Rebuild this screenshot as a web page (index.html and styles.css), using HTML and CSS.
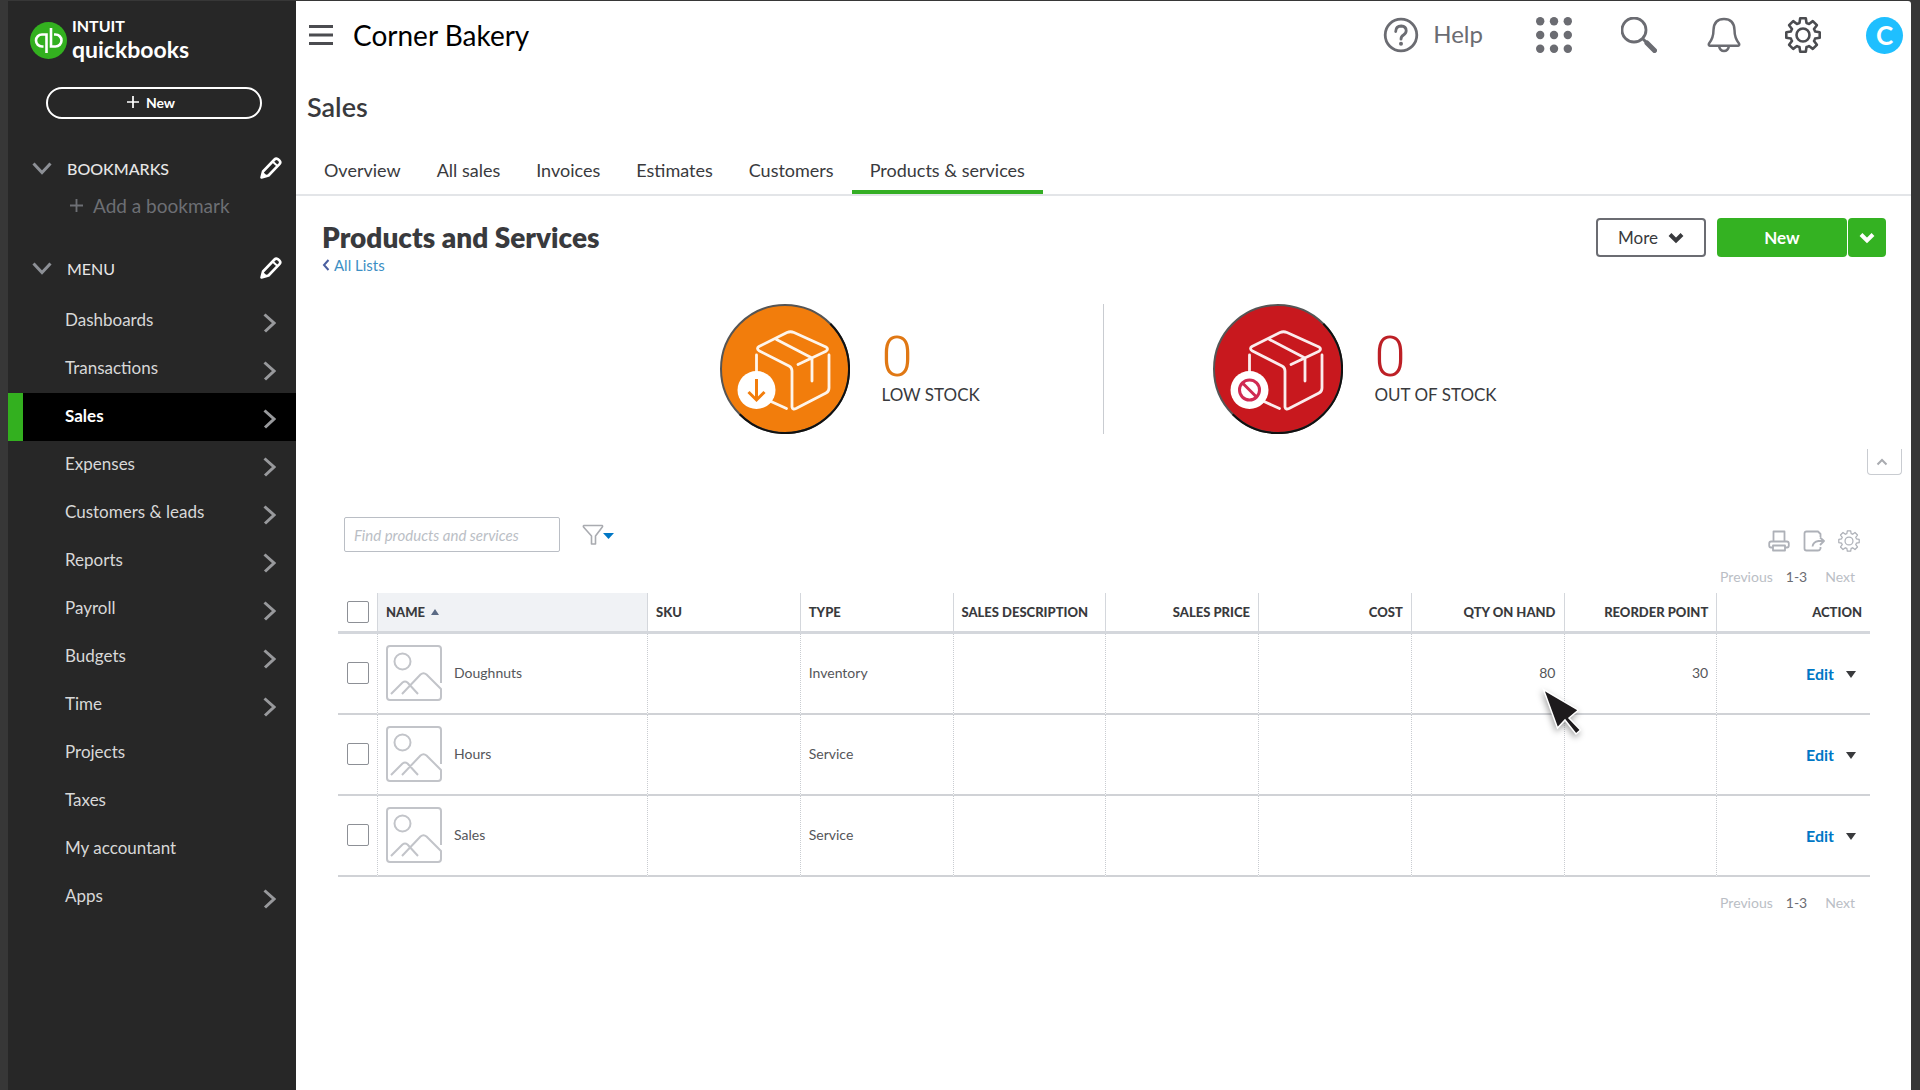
FILE: index.html
```html
<!DOCTYPE html>
<html lang="en">
<head>
<meta charset="utf-8">
<title>Products and Services</title>
<meta name="viewport" content="width=device-width, initial-scale=1">
<link rel="stylesheet" href="styles.css">
</head>
<body>
<svg class="symbols" aria-hidden="true">
  <symbol id="chevron-right" viewBox="0 0 13 20"><path d="M1.5 1.5 11 10l-9 8.500" fill="none" stroke="currentColor" stroke-width="3"/></symbol>
  <symbol id="chevron-down" viewBox="0 0 20 13"><path d="M1.500 1.500 10 10.500l8.500-9" fill="none" stroke="currentColor" stroke-width="3"/></symbol>
  <symbol id="chevron-bold" viewBox="0 0 16 12"><path d="M2 2.500l6 6 6-6" fill="none" stroke="currentColor" stroke-width="4"/></symbol>
  <symbol id="pencil" viewBox="0 0 22 22"><g fill="none" stroke="currentColor" stroke-width="2.600" stroke-linejoin="round"><path d="M1.500 20.500l1.500-6L14.500 2.500q1.500-1.500 3.200-.4l1.800 1.500q1.500 1.500.2 3.200L8.500 18.500z"/><path d="M12.800 4.800l4.700 4.200" stroke-width="2"/></g><path d="M1 21l2-6 4.500 4z" fill="currentColor"/></symbol>
  <symbol id="gear" viewBox="-18 -18 36 36"><g fill="none" stroke="currentColor" stroke-linejoin="round"><path d="M-3.500-12.100-2.800-16.700H2.800L3.500-12.100Q5 -11.700 6-11L9.800-13.900 13.900-9.800 11-6Q11.700-5 12.100-3.500L16.700-2.800V2.800L12.100 3.500Q11.700 5 11 6L13.900 9.800 9.800 13.900 6 11Q5 11.700 3.500 12.100L2.800 16.700H-2.800L-3.500 12.100Q-5 11.700-6 11L-9.800 13.900-13.900 9.800-11 6Q-11.700 5-12.100 3.500L-16.700 2.800V-2.800L-12.100-3.500Q-11.700-5-11-6L-13.900-9.800-9.800-13.900-6-11Q-5-11.700-3.500-12.100Z"/><circle r="6.500"/></g></symbol>
  <symbol id="box" viewBox="0 0 130 130"><g fill="none" stroke="#fff" stroke-opacity=".92" stroke-width="2.800" stroke-linecap="round" stroke-linejoin="round"><path d="M67 28.500q3.500-1.500 7 0l32 14.500q3 1.800 0 4.200L78 60.500M67 28.500 39 42.500q-3 2 0 4.200L69 62q3 1.500 3 5v36q.5 3 4 1.500L106 89q3-1.500 3-5V51M56.500 35.500 92 54v23M36.500 51v18M51 97.500l15.500 7"/></g><circle cx="36.500" cy="86" r="19" fill="#fff"/></symbol>
  <symbol id="thumb" viewBox="0 0 56 56"><g fill="none" stroke="currentColor" stroke-width="2" stroke-linejoin="round"><path d="M55 38V4q0-3-3-3H4Q1 1 1 4v48q0 3 3 3h48q3 0 3-3v-8L40.500 29.500Q37.500 27 34.500 29.500L16 49M5 49l11.500-11.500q2.500-2 5 0L32 49"/><circle cx="16.500" cy="16.500" r="8"/></g></symbol>
</svg>

<aside class="sidebar">
  <a class="brand" href="#">
    <svg class="brand-mark" viewBox="0 0 37 37" aria-hidden="true"><circle cx="18.500" cy="18.500" r="18.500" fill="#33b01f"/><g fill="none" stroke="#fff" stroke-width="2.600"><path d="M16.500 31V12.500H12a6 6 0 0 0 0 12h1.500M21 6v18.500h4.500a6 6 0 0 0 0-12H24"/></g></svg>
    <span class="brand-text"><span class="brand-top">INTUIT</span><span class="brand-name">quickbooks</span></span>
  </a>
  <button class="new-pill" type="button"><svg viewBox="0 0 14 14" aria-hidden="true"><path d="M7 0v14M0 7h14" stroke="currentColor" stroke-width="2"/></svg>New</button>

  <div class="group-head bookmarks"><svg class="fold" aria-hidden="true"><use href="#chevron-down"/></svg><span>BOOKMARKS</span><button type="button" aria-label="Edit bookmarks"><svg class="pencil"><use href="#pencil"/></svg></button></div>
  <a class="add-bookmark" href="#"><svg viewBox="0 0 14 14" aria-hidden="true"><path d="M7 0v14M0 7h14" stroke="currentColor" stroke-width="2"/></svg>Add a bookmark</a>
  <div class="group-head menu-head"><svg class="fold" aria-hidden="true"><use href="#chevron-down"/></svg><span>MENU</span><button type="button" aria-label="Edit menu"><svg class="pencil"><use href="#pencil"/></svg></button></div>

  <nav class="menu">
    <a href="#">Dashboards<svg><use href="#chevron-right"/></svg></a>
    <a href="#">Transactions<svg><use href="#chevron-right"/></svg></a>
    <a href="#" class="current">Sales<svg><use href="#chevron-right"/></svg></a>
    <a href="#">Expenses<svg><use href="#chevron-right"/></svg></a>
    <a href="#">Customers &amp; leads<svg><use href="#chevron-right"/></svg></a>
    <a href="#">Reports<svg><use href="#chevron-right"/></svg></a>
    <a href="#">Payroll<svg><use href="#chevron-right"/></svg></a>
    <a href="#">Budgets<svg><use href="#chevron-right"/></svg></a>
    <a href="#">Time<svg><use href="#chevron-right"/></svg></a>
    <a href="#">Projects</a>
    <a href="#">Taxes</a>
    <a href="#">My accountant</a>
    <a href="#">Apps<svg><use href="#chevron-right"/></svg></a>
  </nav>
</aside>

<main class="page">
  <header class="topbar">
    <button class="burger" type="button" aria-label="Toggle menu"><svg viewBox="0 0 24 20"><path d="M0 1.500h24M0 10h24M0 18.500h24" stroke="#4b4c50" stroke-width="2.800"/></svg></button>
    <span class="company">Corner Bakery</span>
    <div class="tools">
      <button class="help" type="button"><svg viewBox="0 0 36 36" aria-hidden="true"><circle cx="18" cy="18" r="15.800" fill="none" stroke="currentColor" stroke-width="2.800"/><path d="M12.700 14.500q.2-5.500 5.500-5.500 5 .2 5 4.800 0 2.400-2.700 4.200-2.500 1.600-2.500 4.200" fill="none" stroke="currentColor" stroke-width="2.800" stroke-linecap="round"/><circle cx="18" cy="26.700" r="2" fill="currentColor"/></svg><span>Help</span></button>
      <button type="button" aria-label="Apps"><svg viewBox="0 0 36 36"><g fill="currentColor"><circle cx="4.200" cy="4.200" r="4.200"/><circle cx="18" cy="4.200" r="4.200"/><circle cx="31.800" cy="4.200" r="4.200"/><circle cx="4.200" cy="18" r="4.200"/><circle cx="18" cy="18" r="4.200"/><circle cx="31.800" cy="18" r="4.200"/><circle cx="4.200" cy="31.800" r="4.200"/><circle cx="18" cy="31.800" r="4.200"/><circle cx="31.800" cy="31.800" r="4.200"/></g></svg></button>
      <button type="button" aria-label="Search"><svg viewBox="0 0 36 36"><circle cx="13" cy="13" r="12" fill="none" stroke="currentColor" stroke-width="2.800"/><path d="M22 22l5 5" stroke="currentColor" stroke-width="3"/><path d="M26 26l7.500 7.500" stroke="currentColor" stroke-width="5" stroke-linecap="round"/></svg></button>
      <button type="button" aria-label="Notifications"><svg viewBox="0 0 36 36"><path d="M3 26.500Q7.500 21 7.500 13 8 2 18 2t10.500 11q0 8 4.500 13.500.8 1.800-1 2.200H4q-1.800-.4-1-2.200zM13 29q1 5 5 5t5-5" fill="none" stroke="currentColor" stroke-width="2.500" stroke-linejoin="round"/></svg></button>
      <button class="settings" type="button" aria-label="Settings"><svg class="gear"><use href="#gear"/></svg></button>
      <button class="avatar" type="button">C</button>
    </div>
  </header>

  <h1 class="section-title">Sales</h1>
  <nav class="tabs">
    <a href="#">Overview</a><a href="#">All sales</a><a href="#">Invoices</a><a href="#">Estimates</a><a href="#">Customers</a><a href="#" class="active">Products &amp; services</a>
  </nav>

  <section class="title-row">
    <div>
      <h2>Products and Services</h2>
      <a class="back" href="#"><svg viewBox="0 0 8 12" aria-hidden="true"><path d="M6.500 1 2 6l4.500 5" fill="none" stroke="#4a5fa0" stroke-width="2"/></svg>All Lists</a>
    </div>
    <div class="actions">
      <button class="more" type="button">More<svg aria-hidden="true"><use href="#chevron-bold"/></svg></button>
      <div class="split"><button class="new" type="button">New</button><button class="drop" type="button" aria-label="More new options"><svg><use href="#chevron-bold"/></svg></button></div>
    </div>
  </section>

  <section class="stats">
    <div class="stat low">
      <svg class="stat-icon" viewBox="0 0 130 130" aria-hidden="true"><circle cx="65" cy="65" r="64" fill="#f27d0c" stroke="#555" stroke-width="2"/><path d="M110.300 19.700A64 64 0 1 1 19.700 110.300" fill="none" stroke="#111" stroke-width="2"/><use href="#box" width="130" height="130"/><path d="M36.500 75v19M28.500 88l8 8 8-8" fill="none" stroke="#f27d0c" stroke-width="3"/></svg>
      <div class="stat-text"><strong>0</strong><span>LOW STOCK</span></div>
    </div>
    <div class="stat out">
      <svg class="stat-icon" viewBox="0 0 130 130" aria-hidden="true"><circle cx="65" cy="65" r="64" fill="#c8181e" stroke="#555" stroke-width="2"/><path d="M110.300 19.700A64 64 0 1 1 19.700 110.300" fill="none" stroke="#111" stroke-width="2"/><use href="#box" width="130" height="130"/><g fill="none" stroke="#d02a52" stroke-width="3"><circle cx="36.500" cy="86" r="10"/><path d="M29.500 79l14 14"/></g></svg>
      <div class="stat-text"><strong>0</strong><span>OUT OF STOCK</span></div>
    </div>
  </section>
  <div class="collapse-row"><button type="button" aria-label="Collapse summary"><svg viewBox="0 0 12 8"><path d="M1.500 6.500 6 2l4.500 4.500" fill="none" stroke="#a9abb0" stroke-width="2"/></svg></button></div>

  <section class="list">
    <div class="filters">
      <input class="find" type="text" placeholder="Find products and services" aria-label="Find products and services">
      <button class="filter" type="button" aria-label="Filter"><svg viewBox="0 0 32 22"><path d="M2 1.500h18q1 .5.300 1.500L13.500 12v8h-4v-8L1.500 3q-.5-1 .5-1.500z" fill="none" stroke="#a9abb0" stroke-width="1.600" stroke-linejoin="round"/><path d="M21 9h11l-5.500 6z" fill="#0077c5"/></svg></button>
    </div>
    <div class="list-tools">
      <button type="button" aria-label="Print"><svg viewBox="0 0 22 22"><g fill="none" stroke="currentColor" stroke-width="1.800" stroke-linejoin="round"><path d="M5.500 11V1.500h11V11M5 17.500H3q-1.800 0-1.800-2v-2q0-2 2-2h15.600q2 0 2 2v2q0 2-1.800 2h-2M5 15.500h12v5H5z"/></g></svg></button>
      <button type="button" aria-label="Export"><svg viewBox="0 0 22 22"><g fill="none" stroke="currentColor" stroke-width="1.800" stroke-linejoin="round"><path d="M17.500 7V4L15 1.500H3.500Q1.500 1.500 1.500 3.500v15q0 2 2 2H15q2 0 2.500-2V17M9.500 16.500q.5-4.500 6-5.500h5M17 7.500l4 3.500-4 4"/></g></svg></button>
      <button type="button" aria-label="Table settings"><svg class="gear"><use href="#gear"/></svg></button>
    </div>
    <div class="pager"><button type="button">Previous</button><span>1-3</span><button type="button">Next</button></div>

    <table>
      <colgroup><col class="c-check"><col class="c-name"><col span="8"></colgroup>
      <thead>
        <tr><th class="check"><input type="checkbox" aria-label="Select all"></th><th class="sorted">NAME<svg class="sort" viewBox="0 0 8 6" aria-hidden="true"><path d="M0 6 4 0l4 6z" fill="#5b6b85"/></svg></th><th>SKU</th><th>TYPE</th><th>SALES DESCRIPTION</th><th class="num">SALES PRICE</th><th class="num">COST</th><th class="num">QTY ON HAND</th><th class="num">REORDER POINT</th><th class="num">ACTION</th></tr>
      </thead>
      <tbody>
        <tr><td class="check"><input type="checkbox" aria-label="Select Doughnuts"></td><td><div class="item"><svg class="thumb"><use href="#thumb"/></svg>Doughnuts</div></td><td></td><td>Inventory</td><td></td><td></td><td></td><td class="num qty">80<svg class="cursor" viewBox="0 0 44 50" aria-hidden="true"><path d="M3.500 2.500 38.500 23 29 31l11.500 12-4.500 4L25 33l-7.500 8z" fill="#1d1a1c" stroke="#fff" stroke-width="1.500"/></svg></td><td class="num">30</td><td class="num"><button class="edit" type="button">Edit<svg viewBox="0 0 10 8"><path d="M0 1h10L5 8z" fill="#393a3d"/></svg></button></td></tr>
        <tr><td class="check"><input type="checkbox" aria-label="Select Hours"></td><td><div class="item"><svg class="thumb"><use href="#thumb"/></svg>Hours</div></td><td></td><td>Service</td><td></td><td></td><td></td><td></td><td></td><td class="num"><button class="edit" type="button">Edit<svg viewBox="0 0 10 8"><path d="M0 1h10L5 8z" fill="#393a3d"/></svg></button></td></tr>
        <tr><td class="check"><input type="checkbox" aria-label="Select Sales"></td><td><div class="item"><svg class="thumb"><use href="#thumb"/></svg>Sales</div></td><td></td><td>Service</td><td></td><td></td><td></td><td></td><td></td><td class="num"><button class="edit" type="button">Edit<svg viewBox="0 0 10 8"><path d="M0 1h10L5 8z" fill="#393a3d"/></svg></button></td></tr>
      </tbody>
    </table>
    <div class="pager bottom"><button type="button">Previous</button><span>1-3</span><button type="button">Next</button></div>
  </section>
</main>
</body>
</html>
```
FILE: styles.css
```css
* { box-sizing: border-box; }

body {
  margin: 0;
  min-height: 100vh;
  display: flex;
  padding: 1px 9px 0 8px;
  background: #373737;
  color: #393a3d;
  font-family: Lato, "Liberation Sans", sans-serif;
  font-size: 17px;
}

.symbols { position: absolute; width: 0; height: 0; }
svg { display: block; flex: none; }
a { color: inherit; text-decoration: none; }
button { font: inherit; color: inherit; background: none; border: 0; padding: 0; margin: 0; cursor: pointer; }
h1, h2 { margin: 0; }

/* Sidebar */
.sidebar { width: 288px; flex: none; background: #272727; color: #d8d8d8; display: flex; flex-direction: column; }
.brand { display: flex; align-items: center; gap: 5px; height: 46px; margin: 16px 22px 0; color: #fff; }
.brand-mark { width: 37px; height: 37px; }
.brand-text { display: flex; flex-direction: column; font-weight: 700; }
.brand-top { font-size: 16px; line-height: 18px; }
.brand-name { font-size: 23px; line-height: 28px; }
.new-pill {
  display: flex; align-items: center; justify-content: center; gap: 7px;
  height: 32px; margin: 24px 34px 0 38px; padding: 0 6px 2px 0;
  border: 2px solid #fff; border-radius: 16px;
  color: #fff; font-size: 14px; font-weight: 700;
}
.new-pill svg { width: 12px; height: 12px; }
.group-head { display: flex; align-items: center; height: 32px; padding: 0 14px 0 24px; font-size: 16px; color: #e6e6e6; }
.group-head span { flex: 1; padding-left: 15px; }
.bookmarks { margin-top: 33px; font-weight: 500; }
.menu-head { margin-top: 28px; }
.fold { width: 20px; height: 13px; color: #8d9096; }
.pencil { width: 22px; height: 22px; color: #fff; }
.add-bookmark { display: flex; align-items: center; gap: 10px; height: 38px; margin-top: 2px; padding-left: 62px; font-size: 19px; color: #6d6f74; }
.add-bookmark svg { width: 13px; height: 13px; }
.menu { margin-top: 13px; }
.menu a { display: flex; align-items: center; justify-content: space-between; height: 48px; padding: 0 20px 4px 57px; }
.menu svg { width: 13px; height: 20px; margin-top: 8px; color: #98999c; }
.menu .current { background: #000; border-left: 15px solid #33b01f; padding-left: 42px; color: #fff; font-weight: 700; }

/* Top bar */
.page { flex: 1; min-width: 0; background: #fff; border-top-right-radius: 3px; }
.topbar { display: flex; align-items: center; height: 68px; padding: 0 8px 0 13px; }
.burger svg { width: 24px; height: 20px; }
.company { margin-left: 20px; font-size: 28px; color: #000; }
.tools { margin-left: auto; display: flex; align-items: center; color: #6b6c72; }
.tools svg { width: 36px; height: 36px; }
.tools button { margin-left: 49px; }
.tools .help { display: flex; align-items: center; gap: 14px; font-size: 24px; margin: 0 4px 0 0; }
.help span { padding-bottom: 3px; }
.tools .settings { margin-left: 43px; color: #4b4c50; }
.gear { stroke-width: 2.6px; }
.list-tools .gear { stroke-width: 2px; }
.tools .avatar { width: 37px; height: 37px; margin-left: 45px; border-radius: 50%; background: #1fbfff; color: #fff; font-size: 26px; line-height: 35px; font-weight: 700; }

/* Section heading and tabs */
.section-title { height: 77px; padding: 21px 11px 0; font-size: 27px; line-height: 34px; font-weight: 600; }
.tabs { display: flex; padding-left: 10px; border-bottom: 2px solid #e3e5e8; height: 50px; font-size: 18px; }
.tabs a { padding: 13px 18px 0; line-height: 22px; border-bottom: 4px solid transparent; }
.tabs .active { border-bottom-color: #34ae24; border-radius: 3px 3px 0 0; }

/* Title row */
.title-row { display: flex; justify-content: space-between; align-items: flex-start; padding: 22px 25px 0 26px; height: 108px; }
.title-row h2 { font-size: 28px; line-height: 39px; font-weight: 800; }
.back { display: flex; align-items: center; gap: 4px; line-height: 16px; font-size: 15px; color: #3d8fc4; }
.back svg { width: 8px; height: 12px; }
.actions { display: flex; gap: 11px; }
.more { display: flex; align-items: center; justify-content: center; gap: 10px; width: 110px; height: 39px; border: 2px solid #6b6c72; border-radius: 4px; font-size: 17px; }
.actions svg { width: 16px; height: 12px; }
.split { display: flex; gap: 1px; color: #fff; font-weight: 700; }
.new, .drop { height: 39px; background: #34b222; border-radius: 4px; }
.new { width: 130px; }
.drop { width: 38px; display: grid; place-items: center; }

/* Stock summary */
.stats { display: grid; grid-template-columns: 1fr 1fr; height: 130px; }
.stat { display: flex; gap: 32px; padding: 0 109px; }
.low { justify-content: flex-end; border-right: 1px solid #c9ccd1; }
.stat-icon { width: 130px; height: 130px; }
.stat-text { width: 112px; white-space: nowrap; padding-top: 26px; font-size: 17px; }
.stat-text strong { display: block; font-family: Roboto, Lato, sans-serif; font-size: 56px; line-height: 54px; font-weight: 300; }
.stat-text span { display: block; line-height: 22px; }
.low strong { color: #e07814; }
.out strong { color: #bd2026; }
.collapse-row { display: flex; justify-content: flex-end; padding: 15px 9px 0; }
.collapse-row button { width: 35px; height: 26px; border: 1px solid #c9ccd1; border-top: 0; border-radius: 0 0 4px 4px; padding-left: 8px; }
.collapse-row svg { width: 12px; height: 8px; }

/* Product list */
.list { padding: 42px 41px 0 42px; font-size: 14px; }
.filters { display: flex; align-items: center; gap: 22px; padding-left: 6px; }
.find { width: 216px; height: 35px; padding: 0 9px; border: 1px solid #babec5; border-radius: 2px; font: italic 15px Lato, sans-serif; color: #393a3d; }
.find::placeholder { color: #babec5; opacity: 1; }
.filter svg { width: 32px; height: 22px; }
.list-tools { display: flex; justify-content: flex-end; gap: 13px; height: 22px; margin-top: -22px; padding-right: 10px; color: #aeb1b8; }
.list-tools svg { width: 22px; height: 22px; }
.pager { display: flex; justify-content: flex-end; align-items: center; height: 20px; margin-top: 14px; padding-right: 15px; font-size: 14px; }
.pager button { color: #babec5; }
.pager span { margin: 0 18px 0 13px; color: #6b6c72; }

table { width: 100%; margin-top: 7px; border-collapse: separate; border-spacing: 0; table-layout: fixed; }
.c-check { width: 40px; }
.c-name { width: 270px; }
th, td { padding: 0 8px; text-align: left; border-right: 1px solid #d4d7dc; }
th { height: 41px; border-bottom: 3px solid #d4d7dc; font-size: 13px; font-weight: 900; white-space: nowrap; }
td { height: 81px; padding-bottom: 2px; border-bottom: 2px solid #d0d2d6; border-right: 1px dotted #c9ccd1; color: #55565a; }
th:last-child, td:last-child { border-right: 0; }
.num { text-align: right; }
.sorted { background: #f0f2f5; }
.sort { display: inline-block; width: 8px; height: 6px; margin: 0 0 2px 6px; }
.check input {
  appearance: none; display: block; width: 22px; height: 22px; margin: 0 0 0 1px;
  border: 1px solid #8d9096; border-radius: 2px; background: #fff;
}
.item { display: flex; align-items: center; gap: 12px; }
.thumb { width: 56px; height: 56px; color: #c2c4c9; }
.edit { display: inline-flex; align-items: center; gap: 12px; margin-right: 6px; padding-top: 2px; color: #0077c5; font-size: 16px; font-weight: 700; }
.edit svg { width: 10px; height: 8px; }
.qty { position: relative; }
.cursor { position: absolute; right: -20px; top: 53px; width: 44px; height: 50px; z-index: 1; filter: drop-shadow(-1px 3px 3px rgba(0, 0, 0, .35)); }
.bottom { margin-top: 15px; }
```
